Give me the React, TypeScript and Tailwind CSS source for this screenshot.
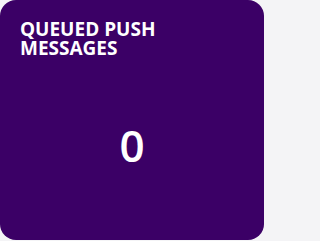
import React from 'react';

const StatCard = ({ title, value }: { title: string; value: number }) => {
    return (
        <div className="flex h-[240px] w-[264px] flex-col rounded-2xl bg-[#3b0066] px-5 pt-5 pb-2 text-white">
            <h2 className="max-w-[170px] text-[19px] font-bold uppercase leading-[19px]">
                {title}
            </h2>
            <div className="flex flex-1 items-center justify-center">
                <span className="text-[44px] font-semibold leading-none">{value}</span>
            </div>
        </div>
    );
};

export default function App() {
    return (
        <div className="min-h-screen bg-[#f4f4f6]" style={{ fontFamily: '"Open Sans", sans-serif' }}>
            <StatCard title="Queued Push Messages" value={0} />
        </div>
    );
}
